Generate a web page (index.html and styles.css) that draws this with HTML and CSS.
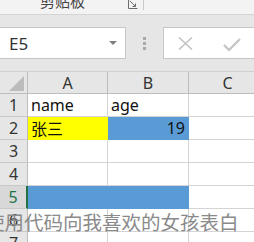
FILE: index.html
```html
<!DOCTYPE html>
<html lang="zh">
<head>
    <meta charset="UTF-8">
    <meta name="viewport" content="width=device-width, initial-scale=1.0">
    <title>Excel</title>
    <link rel="stylesheet" href="styles.css">
</head>
<body>
    <div class="window">
        <div class="ribbon">
            <span class="group-label">剪贴板</span>
            <span class="launcher">
                <svg width="10" height="9" viewBox="0 0 10 9">
                    <path d="M0.5 0 V8.5 H9.5" fill="none" stroke="#6d6d6d" stroke-width="1"/>
                    <path d="M2 1 L7.5 6.5 M7.5 3.5 V6.5 H4.5" fill="none" stroke="#6d6d6d" stroke-width="1"/>
                </svg>
            </span>
            <span class="ribbon-sep"></span>
        </div>

        <div class="formula-row">
            <div class="name-box">
                <span>E5</span>
                <span class="caret"></span>
            </div>
            <div class="grip">
                <i></i><i></i><i></i>
            </div>
            <div class="formula-box">
                <svg class="fx-btn cancel" width="17" height="13" viewBox="0 0 17 13">
                    <path d="M2 0.5 L15 12.5 M15 0.5 L2 12.5" stroke="#c4c4c4" stroke-width="1.6" fill="none"/>
                </svg>
                <svg class="fx-btn enter" width="18" height="13" viewBox="0 0 18 13">
                    <path d="M1 7 L6 12 L17 1" stroke="#c4c4c4" stroke-width="2.2" fill="none"/>
                </svg>
            </div>
        </div>

        <div class="sheet">
            <div class="hd corner"><span class="tri"></span></div>
            <div class="hd col">A</div>
            <div class="hd col">B</div>
            <div class="hd col">C</div>

            <div class="hd row">1</div>
            <div class="cell">name</div>
            <div class="cell">age</div>
            <div class="cell"></div>

            <div class="hd row">2</div>
            <div class="cell yellow">张三</div>
            <div class="cell blue num">19</div>
            <div class="cell"></div>

            <div class="hd row">3</div>
            <div class="cell"></div>
            <div class="cell"></div>
            <div class="cell"></div>

            <div class="hd row">4</div>
            <div class="cell"></div>
            <div class="cell"></div>
            <div class="cell"></div>

            <div class="hd row active">5</div>
            <div class="cell blue"></div>
            <div class="cell blue"></div>
            <div class="cell"></div>

            <div class="hd row">6</div>
            <div class="cell"></div>
            <div class="cell"></div>
            <div class="cell"></div>

            <div class="hd row">7</div>
            <div class="cell"></div>
            <div class="cell"></div>
            <div class="cell"></div>
        </div>

        <div class="caption">使用代码向我喜欢的女孩表白</div>
    </div>
</body>
</html>
```

FILE: styles.css
```css
body {
    margin: 0;
    padding: 0;
    font-family: "Noto Sans", "Noto Sans CJK SC", sans-serif;
    background: #e6e6e6;
    overflow: hidden;
}

.window {
    position: relative;
    width: 254px;
    height: 242px;
    overflow: hidden;
}

/* ribbon strip at the top (cut off) */
.ribbon {
    height: 14px;
    background: #f3f3f3;
    border-bottom: 1px solid #d5d5d5;
    display: flex;
    align-items: flex-start;
    overflow: hidden;
}

.group-label {
    margin-left: 40px;
    margin-top: -9px;
    font-size: 15px;
    line-height: 20px;
    color: #444;
}

.launcher {
    margin-left: 43px;
    display: flex;
}

.ribbon-sep {
    width: 1px;
    height: 10px;
    margin-left: 5px;
    background: #c8c8c8;
}

/* name box + formula bar */
.formula-row {
    display: flex;
    align-items: center;
    padding: 12px 0 12px 0;
    height: 32px;
}

.name-box {
    box-sizing: border-box;
    width: 127px;
    height: 32px;
    margin-left: -1px;
    background: #fff;
    border: 1px solid #c6c6c6;
    display: flex;
    align-items: center;
    justify-content: space-between;
    padding: 0 8px 0 9px;
    font-size: 17px;
    color: #333;
}

.caret {
    width: 0;
    height: 0;
    border-left: 4px solid transparent;
    border-right: 4px solid transparent;
    border-top: 4px solid #808080;
}

.grip {
    width: 37px;
    display: flex;
    flex-direction: column;
    align-items: center;
    gap: 2px;
}

.grip i {
    display: block;
    width: 3px;
    height: 3px;
    background: #a9a9a9;
}

.formula-box {
    box-sizing: border-box;
    flex: 1;
    height: 32px;
    margin-right: -10px;
    background: #fff;
    border: 1px solid #c6c6c6;
    display: flex;
    align-items: center;
    padding-left: 13px;
}

.fx-btn.enter {
    margin-left: 29px;
    margin-top: 2px;
}

/* grid */
.sheet {
    display: grid;
    grid-template-columns: 28px 80px 81px 78px;
    grid-template-rows: 22px repeat(7, 23px);
    background: #fff;
    border-top: 1px solid #d0d0d0;
}

.hd {
    box-sizing: border-box;
    background: #e6e6e6;
    border-right: 1px solid #bdbdbd;
    border-bottom: 1px solid #bdbdbd;
    color: #333;
    font-size: 16px;
    display: flex;
    align-items: center;
    justify-content: center;
}

.corner {
    position: relative;
}

.tri {
    position: absolute;
    right: 3px;
    bottom: 2px;
    width: 0;
    height: 0;
    border-left: 15px solid transparent;
    border-bottom: 15px solid #bcbcbc;
}

.hd.row {
    background: #e6e6e6;
    border-bottom-color: #c8c8c8;
}

.hd.active {
    color: #217346;
    border-right: 2px solid #217346;
    background: #d8d8d8;
}

.cell {
    box-sizing: border-box;
    border-right: 1px solid #d4d4d4;
    border-bottom: 1px solid #d4d4d4;
    font-size: 16px;
    color: #111;
    padding: 0 3px;
    display: flex;
    align-items: center;
    white-space: nowrap;
    overflow: hidden;
}

.cell.yellow {
    background: #ffff00;
    border-right-color: #ffff00;
    border-bottom-color: #ffff00;
}

.cell.blue {
    background: #5b9bd5;
    border-right-color: #5b9bd5;
    border-bottom-color: #5b9bd5;
}

.cell.num {
    justify-content: flex-end;
}

/* watermark caption over the sheet */
.caption {
    position: absolute;
    left: -15px;
    top: 209px;
    font-family: "Noto Sans CJK SC", sans-serif;
    font-size: 19.5px;
    line-height: 26px;
    color: #8a8a8a;
    white-space: nowrap;
}
```
